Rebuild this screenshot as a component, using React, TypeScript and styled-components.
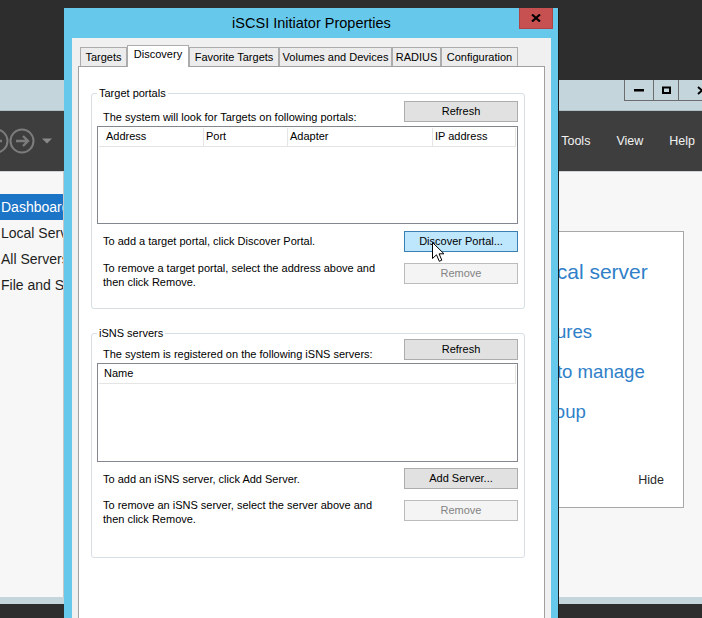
import React from "react";
import styled, { createGlobalStyle } from "styled-components";

const GlobalStyle = createGlobalStyle`
  html, body { margin: 0; padding: 0; background: #2d2d2d; }
  body { font-family: "Liberation Sans", Arial, sans-serif; color: #000; }
  #root { width: 702px; height: 618px; }
`;

const Desktop = styled.div`
  position: relative;
  width: 702px;
  height: 618px;
  overflow: hidden;
  background: #2d2d2d;
`;

/* ---------- Server Manager (background window) ---------- */
const SmWindow = styled.div`
  position: absolute;
  left: 0;
  top: 80px;
  width: 702px;
  height: 524px;
  display: flex;
  flex-direction: column;
  background: #f7f7f7;
`;

const SmTitleBar = styled.div`
  flex: none;
  height: 31px;
  background: #c4d5dc;
  display: flex;
  justify-content: flex-end;
  align-items: flex-start;
  border-bottom: 1px solid #aebfc6;
  box-sizing: border-box;
`;

const WinButton = styled.div<{ $w: number; $mr?: number }>`
  width: ${(p) => p.$w}px;
  height: 21px;
  flex: none;
  box-sizing: border-box;
  border-left: 1px solid #6d6d6d;
  border-bottom: 1px solid #6d6d6d;
  margin-right: ${(p) => p.$mr ?? 0}px;
  display: flex;
  align-items: center;
  justify-content: center;
`;

const SmToolbar = styled.div`
  flex: none;
  height: 61px;
  background: #3e3e3e;
  display: flex;
  align-items: center;
  padding-right: 7px;
  border-bottom: 1px solid #cfd6d9;
  box-sizing: border-box;
`;

const NavArrows = styled.svg`
  margin-left: -16px;
  flex: none;
`;

const MenuBar = styled.div`
  margin-left: auto;
  display: flex;
  gap: 26px;
`;

const MenuItem = styled.span`
  font-size: 12.5px;
  color: #f2f2f2;
`;

const SmBody = styled.div`
  flex: 1;
  display: flex;
  min-height: 0;
`;

const NavPane = styled.div`
  width: 64px;
  flex: none;
  box-sizing: border-box;
  border-right: 1px solid #c8c8c8;
  padding-top: 22px;
  overflow: hidden;
  white-space: nowrap;
`;

const NavItem = styled.div<{ $active?: boolean }>`
  height: 26px;
  line-height: 26px;
  padding-left: 1px;
  font-size: 14px;
  color: ${(p) => (p.$active ? "#ffffff" : "#1e1e1e")};
  background: ${(p) => (p.$active ? "#1c74c6" : "transparent")};
`;

const SmMain = styled.div`
  flex: 1;
  display: flex;
  justify-content: flex-end;
  align-items: flex-start;
  padding: 59px 18px 0 0;
`;

const QuickStart = styled.div`
  width: 304px;
  height: 277px;
  box-sizing: border-box;
  background: #ffffff;
  border: 1px solid #a8a8a8;
  padding: 26px 19px 0 24px;
  display: flex;
  flex-direction: column;
  white-space: nowrap;
  overflow: hidden;
`;

const QsHeading = styled.div`
  font-size: 21px;
  line-height: 28px;
  color: #2f80c9;
  margin-bottom: 26px;
`;

const QsItem = styled.div`
  font-size: 18.6px;
  line-height: 40px;
  color: #2f80c9;
`;

const QsHide = styled.div`
  margin-top: 40px;
  align-self: flex-end;
  font-size: 12.5px;
  line-height: 16px;
  color: #2a2a2a;
`;

const SmStatus = styled.div`
  flex: none;
  height: 7px;
  background: #c4d5dc;
`;

/* ---------- Dialog ---------- */
const Dialog = styled.div`
  position: absolute;
  left: 64px;
  top: 8px;
  width: 495px;
  height: 620px;
  box-sizing: border-box;
  background: #66c9ec;
  padding: 0 7px 0 8px;
  border-right: 1px solid #1e1e1e;
  display: flex;
  flex-direction: column;
`;

const DlgTitleBar = styled.div`
  position: relative;
  flex: none;
  height: 30px;
  display: flex;
  justify-content: center;
`;

const DlgTitle = styled.span`
  font-size: 14.5px;
  line-height: 30px;
  color: #000;
`;

const CloseButton = styled.div`
  position: absolute;
  right: -2px;
  top: 0;
  width: 34px;
  height: 21px;
  box-sizing: border-box;
  background: #c75050;
  border: 1px solid #b04444;
  border-top: none;
  display: flex;
  align-items: center;
  justify-content: center;
`;

const Client = styled.div`
  flex: 1;
  background: #f0f0f0;
  padding: 7px 6px 0 6px;
  display: flex;
  flex-direction: column;
  min-height: 0;
`;

const TabStrip = styled.div`
  flex: none;
  height: 22px;
  display: flex;
  align-items: flex-end;
  padding-left: 2px;
  margin-bottom: -1px;
  position: relative;
  z-index: 2;
`;

const Tab = styled.div<{ $w: number; $active?: boolean }>`
  width: ${(p) => p.$w}px;
  height: ${(p) => (p.$active ? 22 : 19)}px;
  margin-bottom: ${(p) => (p.$active ? 0 : 1)}px;
  flex: none;
  box-sizing: border-box;
  border: 1px solid #acacac;
  border-bottom: none;
  background: ${(p) => (p.$active ? "#ffffff" : "#ececec")};
  font-size: 11px;
  line-height: ${(p) => (p.$active ? 17 : 18)}px;
  text-align: center;
  white-space: nowrap;
`;

const TabPanel = styled.div`
  flex: 1;
  position: relative;
  z-index: 1;
  background: #ffffff;
  border: 1px solid #a0a0a0;
  padding: 20px 0 0 12px;
  display: flex;
  flex-direction: column;
  gap: 18px;
`;

const Group = styled.fieldset<{ $pt: number; $pb: number }>`
  margin: 0;
  min-width: 0;
  width: 434px;
  box-sizing: border-box;
  border: 1px solid #d5dfe5;
  border-radius: 3px;
  padding: ${(p) => p.$pt}px 6px ${(p) => p.$pb}px 5px;
`;

const Legend = styled.legend`
  padding: 0 2px;
  font-size: 11px;
  line-height: 12px;
`;

const GroupBody = styled.div`
  display: flex;
  flex-direction: column;
`;

const Row = styled.div<{ $mt?: number }>`
  display: flex;
  justify-content: space-between;
  align-items: flex-start;
  height: 21px;
  flex: none;
  margin-top: ${(p) => p.$mt ?? 0}px;
`;

const Caption = styled.div<{ $dy: number; $lh?: number }>`
  margin-left: 6px;
  margin-top: ${(p) => p.$dy}px;
  font-size: 11px;
  line-height: ${(p) => p.$lh ?? 14}px;
  white-space: nowrap;
`;

type BtnKind = "normal" | "hot" | "disabled";

const PushButton = styled.button<{ $kind?: BtnKind }>`
  flex: none;
  width: 114px;
  height: 21px;
  box-sizing: border-box;
  padding: 0;
  font-family: inherit;
  font-size: 11px;
  line-height: 11px;
  border: 1px solid
    ${(p) => (p.$kind === "hot" ? "#3c7fb1" : p.$kind === "disabled" ? "#bcbcbc" : "#adadad")};
  background: ${(p) => (p.$kind === "hot" ? "#bee6fd" : p.$kind === "disabled" ? "#f4f4f4" : "#e1e1e1")};
  color: ${(p) => (p.$kind === "disabled" ? "#838383" : "#000")};
`;

const ListBox = styled.div<{ $h: number; $mt: number }>`
  height: ${(p) => p.$h}px;
  flex: none;
  margin-top: ${(p) => p.$mt}px;
  box-sizing: border-box;
  border: 1px solid #828790;
  background: #ffffff;
  padding: 1px 0 0 1px;
`;

const ListHeader = styled.div`
  display: flex;
`;

const HeaderCell = styled.div<{ $w: number; $pl: number }>`
  width: ${(p) => p.$w}px;
  height: 19px;
  box-sizing: border-box;
  border-right: 1px solid #e5e5e5;
  border-bottom: 1px solid #e5e5e5;
  padding-left: ${(p) => p.$pl}px;
  font-size: 11px;
  line-height: 17px;
  white-space: nowrap;
`;

const Cursor = styled.svg`
  position: absolute;
  left: 432px;
  top: 242px;
  z-index: 10;
`;

const tabs: { label: string; w: number; active?: boolean }[] = [
  { label: "Targets", w: 47 },
  { label: "Discovery", w: 62, active: true },
  { label: "Favorite Targets", w: 90 },
  { label: "Volumes and Devices", w: 113 },
  { label: "RADIUS", w: 49 },
  { label: "Configuration", w: 77 },
];

export default function App() {
  return (
    <Desktop>
      <GlobalStyle />
      <SmWindow>
        <SmTitleBar>
          <WinButton $w={29}>
            <svg width="10" height="3">
              <rect x="0" y="0" width="10" height="2.5" fill="#000" />
            </svg>
          </WinButton>
          <WinButton $w={25}>
            <svg width="9" height="8">
              <rect x="1" y="1.5" width="7" height="5.5" fill="none" stroke="#000" strokeWidth="2" />
            </svg>
          </WinButton>
          <WinButton $w={46} $mr={-22}>
            <svg width="10" height="9">
              <path d="M1 1 L9 8 M9 1 L1 8" stroke="#000" strokeWidth="2" />
            </svg>
          </WinButton>
        </SmTitleBar>
        <SmToolbar>
          <NavArrows width="72" height="28" viewBox="0 0 72 28">
            <circle cx="12" cy="14" r="11.5" fill="none" stroke="#7c7c7c" strokeWidth="2" />
            <path d="M18 14 H6 M11 9 L6 14 L11 19" fill="none" stroke="#7c7c7c" strokeWidth="2.4" />
            <circle cx="38" cy="14" r="11.5" fill="none" stroke="#7c7c7c" strokeWidth="2" />
            <path d="M32 14 H44 M39 9 L44 14 L39 19" fill="none" stroke="#7c7c7c" strokeWidth="2.4" />
            <path d="M58 11.5 H68 L63 16.5 Z" fill="#8a8a8a" />
          </NavArrows>
          <MenuBar>
            <MenuItem>Tools</MenuItem>
            <MenuItem>View</MenuItem>
            <MenuItem>Help</MenuItem>
          </MenuBar>
        </SmToolbar>
        <SmBody>
          <NavPane>
            <NavItem $active>Dashboard</NavItem>
            <NavItem>Local Server</NavItem>
            <NavItem>All Servers</NavItem>
            <NavItem>File and Storage Services</NavItem>
          </NavPane>
          <SmMain>
            <QuickStart>
              <QsHeading>Configure this local server</QsHeading>
              <QsItem>Add roles and features</QsItem>
              <QsItem>Add other servers to manage</QsItem>
              <QsItem>Create a server group</QsItem>
              <QsHide>Hide</QsHide>
            </QuickStart>
          </SmMain>
        </SmBody>
        <SmStatus />
      </SmWindow>

      <Dialog>
        <DlgTitleBar>
          <DlgTitle>iSCSI Initiator Properties</DlgTitle>
          <CloseButton>
            <svg width="10" height="8">
              <path d="M1 0.5 L9 7.5 M9 0.5 L1 7.5" stroke="#000" strokeWidth="2.2" />
            </svg>
          </CloseButton>
        </DlgTitleBar>
        <Client>
          <TabStrip>
            {tabs.map((t) => (
              <Tab key={t.label} $w={t.w} $active={t.active}>
                {t.label}
              </Tab>
            ))}
          </TabStrip>
          <TabPanel>
            <Group $pt={2} $pb={24}>
              <Legend>Target portals</Legend>
              <GroupBody>
                <Row>
                  <Caption $dy={9}>The system will look for Targets on following portals:</Caption>
                  <PushButton>Refresh</PushButton>
                </Row>
                <ListBox $h={98} $mt={4}>
                  <ListHeader>
                    <HeaderCell $w={105} $pl={7}>Address</HeaderCell>
                    <HeaderCell $w={84} $pl={2}>Port</HeaderCell>
                    <HeaderCell $w={145} $pl={2}>Adapter</HeaderCell>
                    <HeaderCell $w={83} $pl={2}>IP address</HeaderCell>
                  </ListHeader>
                </ListBox>
                <Row $mt={7}>
                  <Caption $dy={3}>To add a target portal, click Discover Portal.</Caption>
                  <PushButton $kind="hot">Discover Portal...</PushButton>
                </Row>
                <Row $mt={11}>
                  <Caption $dy={-1} $lh={13.5}>
                    To remove a target portal, select the address above and
                    <br />
                    then click Remove.
                  </Caption>
                  <PushButton $kind="disabled">Remove</PushButton>
                </Row>
              </GroupBody>
            </Group>
            <Group $pt={0} $pb={36}>
              <Legend>iSNS servers</Legend>
              <GroupBody>
                <Row>
                  <Caption $dy={8}>The system is registered on the following iSNS servers:</Caption>
                  <PushButton>Refresh</PushButton>
                </Row>
                <ListBox $h={99} $mt={3}>
                  <ListHeader>
                    <HeaderCell $w={417} $pl={5}>Name</HeaderCell>
                  </ListHeader>
                </ListBox>
                <Row $mt={6}>
                  <Caption $dy={4}>To add an iSNS server, click Add Server.</Caption>
                  <PushButton>Add Server...</PushButton>
                </Row>
                <Row $mt={11}>
                  <Caption $dy={-1} $lh={13.5}>
                    To remove an iSNS server, select the server above and
                    <br />
                    then click Remove.
                  </Caption>
                  <PushButton $kind="disabled">Remove</PushButton>
                </Row>
              </GroupBody>
            </Group>
          </TabPanel>
        </Client>
      </Dialog>

      <Cursor width="14" height="21" viewBox="0 0 14 21">
        <path
          d="M0.5 0.5 L0.5 16.5 L4.5 12.8 L7.3 19.3 L9.8 18.2 L7.1 11.8 L12 11.8 Z"
          fill="#ffffff"
          stroke="#000000"
          strokeWidth="1"
          strokeLinejoin="miter"
        />
      </Cursor>
    </Desktop>
  );
}
